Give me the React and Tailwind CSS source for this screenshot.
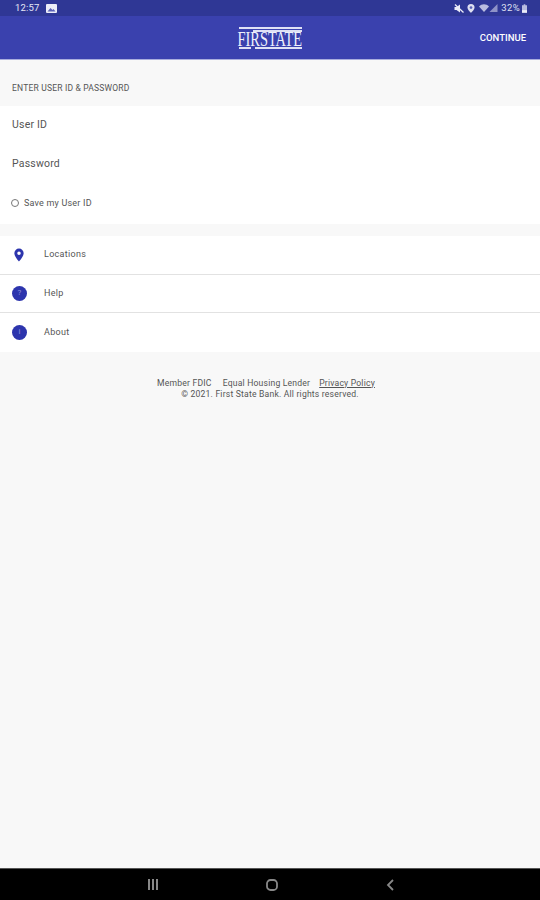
const Row = ({ icon, label, border }) => (
    <div className={`flex items-center h-[38.5px] pl-3 ${border ? "border-b border-[#e2e2e2]" : ""}`}>
        <div className="w-[32px] flex">{icon}</div>
        <span className="text-[9px] tracking-[0.3px] text-[#555]">{label}</span>
    </div>
);

const Badge = ({ children }) => (
    <div className="w-[15px] h-[15px] rounded-full bg-[#2d35ad] flex items-center justify-center text-[8px] leading-none text-[#8d92dc]">
        {children}
    </div>
);

const App = () => {
    return (
        <div className="w-[540px] h-[900px] flex flex-col bg-[#f8f8f8] overflow-hidden font-['Roboto',sans-serif]">
            {/* status bar */}
            <div className="h-[16px] bg-[#2f3795] flex items-center justify-between pl-[15px] pr-[13px] text-white">
                <div className="flex items-center gap-[6px]">
                    <span className="text-[9.5px] leading-none tracking-[0.2px] text-[#e6e7f5]">12:57</span>
                    <svg width="11" height="9" viewBox="0 0 11 9">
                        <rect width="11" height="9" rx="1" fill="#eceDf8" />
                        <path d="M1.5 7.500 4.500 4l2 2 1-1 2 2.500z" fill="#5a61b8" />
                    </svg>
                </div>
                <div className="flex items-center">
                    <svg width="10" height="9" viewBox="0 0 10 9" className="mr-[3px]">
                        <path d="M0.5 3h2L6 .5v8L2.500 6h-2z" fill="#eceDf8" />
                        <path d="M1 .5 9.500 8.500" stroke="#eceDf8" strokeWidth="1.200" />
                    </svg>
                    <svg width="8" height="9" viewBox="0 0 9 10" className="mr-[4px]">
                        <path d="M4.500 0a4 4 0 0 1 4 4c0 2.500-4 6-4 6s-4-3.500-4-6a4 4 0 0 1 4-4z" fill="#dfe0f2" />
                        <circle cx="4.500" cy="4" r="1.500" fill="#5a61b8" />
                    </svg>
                    <svg width="10" height="8" viewBox="0 0 10 8">
                        <path d="M0 2.500C2.800-.5 7.200-.5 10 2.500L5 8z" fill="#b9bce0" />
                    </svg>
                    <svg width="9" height="8" viewBox="0 0 8 8" className="mr-[3px]">
                        <path d="M8 0v8H0z" fill="#8f93c8" />
                    </svg>
                    <span className="text-[9.5px] leading-none tracking-[0.4px] text-[#dfe0f2]">32%</span>
                    <svg width="5" height="9" viewBox="0 0 6 10" className="ml-[2px]">
                        <path d="M2 0h2v1h2v9H0V1h2z" fill="#b9bce0" />
                        <rect y="7" width="6" height="3" fill="#eceDf8" />
                    </svg>
                </div>
            </div>

            {/* app bar */}
            <div className="relative h-[44px] bg-[#3a41ae] border-b border-[#a9addd] flex items-center justify-center shrink-0">
                <div className="flex flex-col items-center w-[63px] text-white">
                    <div className="w-full h-[2px] bg-[#dfe1f5] mb-[1px]" />
                    <div className="h-[2px] w-[49px] self-end bg-[#dfe1f5]" />
                    <div className="w-full h-[15px] flex justify-center overflow-visible">
                        <span className="font-['Liberation_Serif',serif] text-[20px] leading-[15px] scale-x-[0.72] whitespace-nowrap text-[#eef0fb]">FIRSTATE</span>
                    </div>
                    <div className="w-full flex justify-between">
                        <div className="h-[2px] w-[12px] bg-[#dfe1f5]" />
                        <div className="h-[2px] w-[47px] bg-[#dfe1f5]" />
                    </div>
                </div>
                <span className="absolute right-[14px] top-[16px] text-[9.5px] leading-[12px] font-medium text-white">CONTINUE</span>
            </div>

            {/* section title */}
            <div className="h-[46px] pl-3 pt-[23px] shrink-0">
                <div className="text-[8.5px] leading-[10px] tracking-[0.2px] text-[#555] whitespace-nowrap">ENTER USER ID &amp; PASSWORD</div>
            </div>

            {/* login form */}
            <div className="bg-white h-[118px] shrink-0 flex flex-col pl-3">
                <div className="h-[38px] flex items-center text-[10.5px] tracking-[0.2px] text-[#555]">User ID</div>
                <div className="h-[39px] flex items-center text-[10.5px] tracking-[0.2px] text-[#555]">Password</div>
                <div className="h-[41px] flex items-center text-[9px] tracking-[0.2px] text-[#555]">
                    <div className="w-[8px] h-[8px] rounded-full border border-[#777] -ml-[1px] mr-[5px] -mt-[1px]" />
                    Save my User ID
                </div>
            </div>

            {/* links */}
            <div className="bg-white mt-[12px] shrink-0 flex flex-col">
                <Row
                    border
                    label="Locations"
                    icon={
                        <svg width="14" height="14" viewBox="0 0 24 24">
                            <path
                                fillRule="evenodd"
                                d="M12 1a8 8 0 0 1 8 8c0 5.500-8 14-8 14S4 14.500 4 9a8 8 0 0 1 8-8zm0 5a3 3 0 1 0 0 6 3 3 0 0 0 0-6z"
                                fill="#2d35ad"
                            />
                        </svg>
                    }
                />
                <Row border label="Help" icon={<Badge>?</Badge>} />
                <Row label="About" icon={<Badge>i</Badge>} />
            </div>

            {/* footer */}
            <div className="mt-[26px] flex flex-col items-center text-[8.6px] leading-[11px] tracking-[0.2px] text-[#555]">
                <div className="flex mr-[8px]">
                    <span>Member FDIC</span>
                    <span className="ml-[11px]">Equal Housing Lender</span>
                    <span className="ml-[9px] underline">Privacy Policy</span>
                </div>
                <div>© 2021. First State Bank. All rights reserved.</div>
            </div>

            {/* nav bar */}
            <div className="mt-auto h-[32px] bg-black border-t border-[#555] flex items-center justify-between pl-[147px] pr-[146px] shrink-0">
                <svg width="12" height="11" viewBox="0 0 12 11" stroke="#888" strokeWidth="2">
                    <path d="M2 0v11M6 0v11M10 0v11" />
                </svg>
                <svg width="12" height="12" viewBox="0 0 12 12" fill="none" stroke="#888" strokeWidth="1.800" className="-ml-[2px]">
                    <rect x="1" y="1" width="10" height="10" rx="3.500" />
                </svg>
                <svg width="8" height="12" viewBox="0 0 8 12" fill="none" stroke="#888" strokeWidth="1.800">
                    <path d="M7 1 2 6l5 5" />
                </svg>
            </div>
        </div>
    );
};

export default App;
